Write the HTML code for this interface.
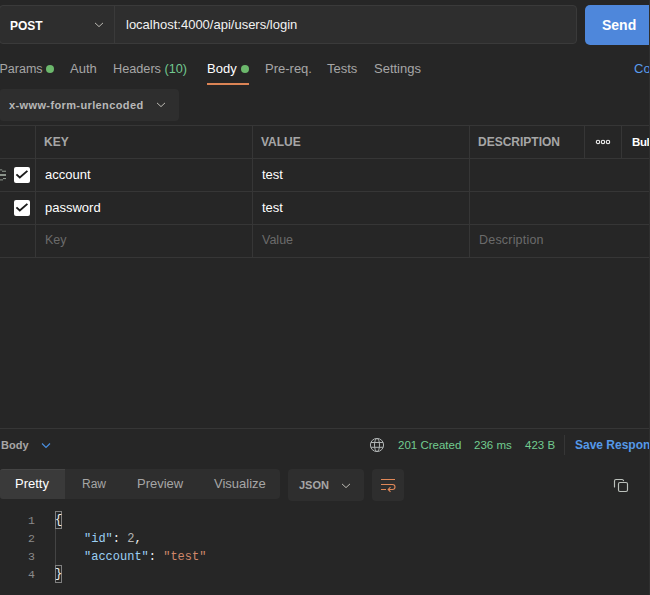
<!DOCTYPE html>
<html><head><meta charset="utf-8">
<style>
*{box-sizing:border-box;margin:0;padding:0}
html,body{width:650px;height:595px;overflow:hidden;background:#262626;font-family:"Liberation Sans",sans-serif;color:#f2f2f2;position:relative}
.abs{position:absolute}
.t{position:absolute;white-space:nowrap;line-height:1}
.hl{position:absolute;height:1px;background:#363636}
.vl{position:absolute;width:1px;background:#363636}
</style></head><body>

<!-- URL bar -->
<div class="abs" style="left:-1px;top:5px;width:578px;height:39px;background:#2e2e2e;border:1px solid #3a3a3a;border-radius:4px"></div>
<div class="vl" style="left:114px;top:6px;height:37px;background:#3a3a3a"></div>
<div class="t" style="left:10px;top:20px;font-size:12px;font-weight:bold;color:#fff">POST</div>
<svg class="abs" style="left:94px;top:21px" width="10" height="7" viewBox="0 0 10 7"><path d="M1 1.9 L5 5.6 L9 1.9" fill="none" stroke="#c4c2ba" stroke-width="0.95"/></svg>
<div class="t" style="left:126px;top:18px;font-size:13px;color:#f2f2f2">localhost:4000/api/users/login</div>
<div class="abs" style="left:585px;top:5px;width:70px;height:40px;background:#4e87db;border-radius:5px"></div>
<div class="t" style="left:602px;top:18px;font-size:14px;font-weight:bold;color:#fff">Send</div>

<!-- tabs -->
<div class="t" style="left:-0.5px;top:63px;font-size:12.5px;color:#a6a6a6">Params</div>
<div class="abs" style="left:46px;top:65px;width:8px;height:8px;border-radius:50%;background:#6cb86c"></div>
<div class="t" style="left:70px;top:62px;font-size:13px;color:#a6a6a6">Auth</div>
<div class="t" style="left:113px;top:63px;font-size:12.7px;color:#a6a6a6">Headers <span style="color:#72c890">(10)</span></div>
<div class="t" style="left:207px;top:62px;font-size:13px;color:#fff">Body</div>
<div class="abs" style="left:241px;top:65px;width:8px;height:8px;border-radius:50%;background:#6cb86c"></div>
<div class="abs" style="left:207px;top:83px;width:42px;height:2px;background:#dc8455"></div>
<div class="t" style="left:265px;top:62px;font-size:13px;color:#a6a6a6">Pre-req.</div>
<div class="t" style="left:327px;top:62px;font-size:13px;color:#a6a6a6">Tests</div>
<div class="t" style="left:374px;top:62px;font-size:13px;color:#a6a6a6">Settings</div>
<div class="t" style="left:634px;top:62px;font-size:13px;color:#5a9cec">Cookies</div>

<!-- body type dropdown -->
<div class="abs" style="left:0;top:89px;width:179px;height:32px;background:#2e2e2e;border-radius:3px 4px 4px 3px"></div>
<div class="t" style="left:9px;top:100px;font-size:11px;font-weight:bold;letter-spacing:0.38px;color:#b8b8b8">x-www-form-urlencoded</div>
<svg class="abs" style="left:156px;top:101px" width="10" height="7" viewBox="0 0 10 7"><path d="M1 1.9 L5 5.6 L9 1.9" fill="none" stroke="#c4c2ba" stroke-width="0.95"/></svg>

<!-- table -->
<div class="hl" style="left:0;top:125px;width:650px"></div>
<div class="hl" style="left:0;top:158px;width:650px"></div>
<div class="hl" style="left:0;top:191px;width:650px"></div>
<div class="hl" style="left:0;top:224px;width:650px"></div>
<div class="hl" style="left:0;top:257px;width:650px"></div>
<div class="vl" style="left:35px;top:125px;height:132px"></div>
<div class="vl" style="left:252px;top:125px;height:132px"></div>
<div class="vl" style="left:469px;top:125px;height:132px"></div>
<div class="vl" style="left:584px;top:125px;height:33px"></div>
<div class="vl" style="left:621px;top:125px;height:33px"></div>

<div class="t" style="left:44px;top:136px;font-size:12px;font-weight:bold;color:#a6a6a6">KEY</div>
<div class="t" style="left:261px;top:136px;font-size:12px;font-weight:bold;color:#a6a6a6">VALUE</div>
<div class="t" style="left:478px;top:136px;font-size:12px;font-weight:bold;color:#a6a6a6">DESCRIPTION</div>
<svg class="abs" style="left:594px;top:137px" width="20" height="10" viewBox="0 0 20 10"><g fill="none" stroke="#f0f0f0" stroke-width="1.1"><circle cx="4" cy="5" r="1.7"/><circle cx="9" cy="5" r="1.7"/><circle cx="14" cy="5" r="1.7"/></g></svg>
<div class="t" style="left:632px;top:137px;font-size:11.5px;font-weight:bold;letter-spacing:-0.4px;color:#fff">Bulk Edit</div>

<!-- drag handle -->
<svg class="abs" style="left:0;top:164px" width="10" height="20" viewBox="0 0 10 20"><g fill="#8b948b"><rect x="0" y="5.2" width="2.2" height="1.3" opacity="0.8"/><rect x="2" y="6.7" width="4" height="1.1"/><rect x="0" y="10" width="6" height="2"/><rect x="3" y="14" width="3" height="1.1"/><rect x="0" y="15.2" width="3" height="1.3" opacity="0.8"/></g></svg>

<!-- checkboxes -->
<div class="abs" style="left:14px;top:167px;width:16px;height:16px;background:#fff;border-radius:2px"></div>
<svg class="abs" style="left:14px;top:167px" width="16" height="16" viewBox="0 0 16 16"><path d="M2.4 7.4 L5.8 10.5 L13.4 3.9" fill="none" stroke="#1a1a1a" stroke-width="1.9"/></svg>
<div class="abs" style="left:14px;top:200px;width:16px;height:16px;background:#fff;border-radius:2px"></div>
<svg class="abs" style="left:14px;top:200px" width="16" height="16" viewBox="0 0 16 16"><path d="M2.4 7.4 L5.8 10.5 L13.4 3.9" fill="none" stroke="#1a1a1a" stroke-width="1.9"/></svg>

<div class="t" style="left:45px;top:168px;font-size:13px;color:#fff">account</div>
<div class="t" style="left:262px;top:168px;font-size:13px;color:#fff">test</div>
<div class="t" style="left:45px;top:201px;font-size:13px;color:#fff">password</div>
<div class="t" style="left:262px;top:201px;font-size:13px;color:#fff">test</div>
<div class="t" style="left:45px;top:234px;font-size:12.5px;color:#6b6b6b">Key</div>
<div class="t" style="left:262px;top:234px;font-size:12.5px;color:#6b6b6b">Value</div>
<div class="t" style="left:479px;top:234px;font-size:12.5px;letter-spacing:0.2px;color:#6b6b6b">Description</div>

<!-- response divider -->
<div class="hl" style="left:0;top:428px;width:650px"></div>
<div class="t" style="left:1px;top:440px;font-size:11px;font-weight:bold;color:#a6a6a6">Body</div>
<svg class="abs" style="left:41px;top:442px" width="10" height="7" viewBox="0 0 10 7"><path d="M1 1.5 L5 5.5 L9 1.5" fill="none" stroke="#4a90e2" stroke-width="1.1"/></svg>

<svg class="abs" style="left:364px;top:432px" width="28" height="26" viewBox="0 0 28 26"><g fill="none" stroke="#b0b4b4" stroke-width="1"><circle cx="13" cy="13" r="6.6"/><ellipse cx="13" cy="13" rx="2.5" ry="6.6"/><path d="M6.9 10.5H19.1M6.9 15.3H19.1"/></g></svg>
<div class="t" style="left:398px;top:440px;font-size:11.5px;color:#72cc90">201 Created</div>
<div class="t" style="left:474px;top:440px;font-size:11.5px;color:#72cc90">236 ms</div>
<div class="t" style="left:525px;top:440px;font-size:11.5px;color:#72cc90">423 B</div>
<div class="vl" style="left:564px;top:435px;height:20px;background:#363636"></div>
<div class="t" style="left:575px;top:439px;font-size:12px;font-weight:bold;color:#5599e8">Save Response</div>

<!-- segmented -->
<div class="abs" style="left:0;top:469px;width:280px;height:30px;background:#2e2e2e;border-radius:3px 4px 4px 3px"></div>
<div class="abs" style="left:0;top:469px;width:65px;height:30px;background:#3a3a3a;border-top:1px solid #444;border-radius:3px 0 0 3px"></div>
<div class="t" style="left:15px;top:477px;font-size:13px;color:#fff">Pretty</div>
<div class="t" style="left:82px;top:478px;font-size:12px;color:#a6a6a6">Raw</div>
<div class="t" style="left:137px;top:477px;font-size:13px;color:#a6a6a6">Preview</div>
<div class="t" style="left:214px;top:477px;font-size:13px;color:#a6a6a6">Visualize</div>

<div class="abs" style="left:288px;top:469px;width:76px;height:32px;background:#2e2e2e;border-radius:4px"></div>
<div class="t" style="left:299px;top:480px;font-size:11px;font-weight:bold;color:#a6a6a6">JSON</div>
<svg class="abs" style="left:341px;top:482px" width="10" height="7" viewBox="0 0 10 7"><path d="M1 1.9 L5 5.6 L9 1.9" fill="none" stroke="#c4c2ba" stroke-width="0.95"/></svg>

<div class="abs" style="left:372px;top:469px;width:32px;height:32px;background:#2e2e2e;border-radius:4px"></div>
<svg class="abs" style="left:374px;top:472px" width="28" height="25" viewBox="0 0 28 25"><g fill="none" stroke="#e08858" stroke-width="1.1"><path d="M7 7.5H21M7 12.5H18.5A2.5 2.5 0 0 1 18.5 17.5H14.5M7 17.5H12"/><path d="M16.5 15.2L14.2 17.5L16.5 19.8"/></g></svg>

<svg class="abs" style="left:606px;top:472px" width="30" height="26" viewBox="0 0 30 26"><g fill="none" stroke="#bcc1bc" stroke-width="1.15" stroke-linecap="round"><rect x="12.5" y="10.5" width="9" height="9" rx="1.5"/><path d="M8.5 15V9A1.5 1.5 0 0 1 10 7.5H16A1.5 1.5 0 0 1 17.5 8.6"/></g></svg>

<!-- code -->
<div style="position:absolute;left:0;top:512px;font-family:'Liberation Mono',monospace;font-size:11.5px;line-height:18px;white-space:pre">
<div class="abs" style="left:28px;top:0;color:#8a8a8a">1</div>
<div class="abs" style="left:28px;top:18px;color:#8a8a8a">2</div>
<div class="abs" style="left:28px;top:36px;color:#8a8a8a">3</div>
<div class="abs" style="left:28px;top:54px;color:#8a8a8a">4</div>
</div>
<div class="abs" style="left:55px;top:511px;width:7px;height:18px;border:1px solid #808080"></div>
<div class="abs" style="left:55px;top:565px;width:7px;height:18px;border:1px solid #808080"></div>
<div class="abs" style="left:55px;top:529px;width:1px;height:36px;background:#444"></div>
<div class="t" style="left:55px;top:511px;font-family:'Liberation Mono',monospace;font-size:12px;line-height:18px;color:#f2f2f2">{</div>
<div class="t" style="left:55px;top:565px;font-family:'Liberation Mono',monospace;font-size:12px;line-height:18px;color:#f2f2f2">}</div>
<div class="t" style="left:84px;top:530px;font-family:'Liberation Mono',monospace;font-size:12px;line-height:18px;color:#f2f2f2"><span style="color:#9cd0f5">"id"</span>: <span style="color:#b5b5b5">2</span>,</div>
<div class="t" style="left:84px;top:548px;font-family:'Liberation Mono',monospace;font-size:12px;line-height:18px;color:#f2f2f2"><span style="color:#9cd0f5">"account"</span>: <span style="color:#d0886a">"test"</span></div>

<div class="abs" style="left:649px;top:0;width:1px;height:595px;background:#2f2f2f"></div>
</body></html>
